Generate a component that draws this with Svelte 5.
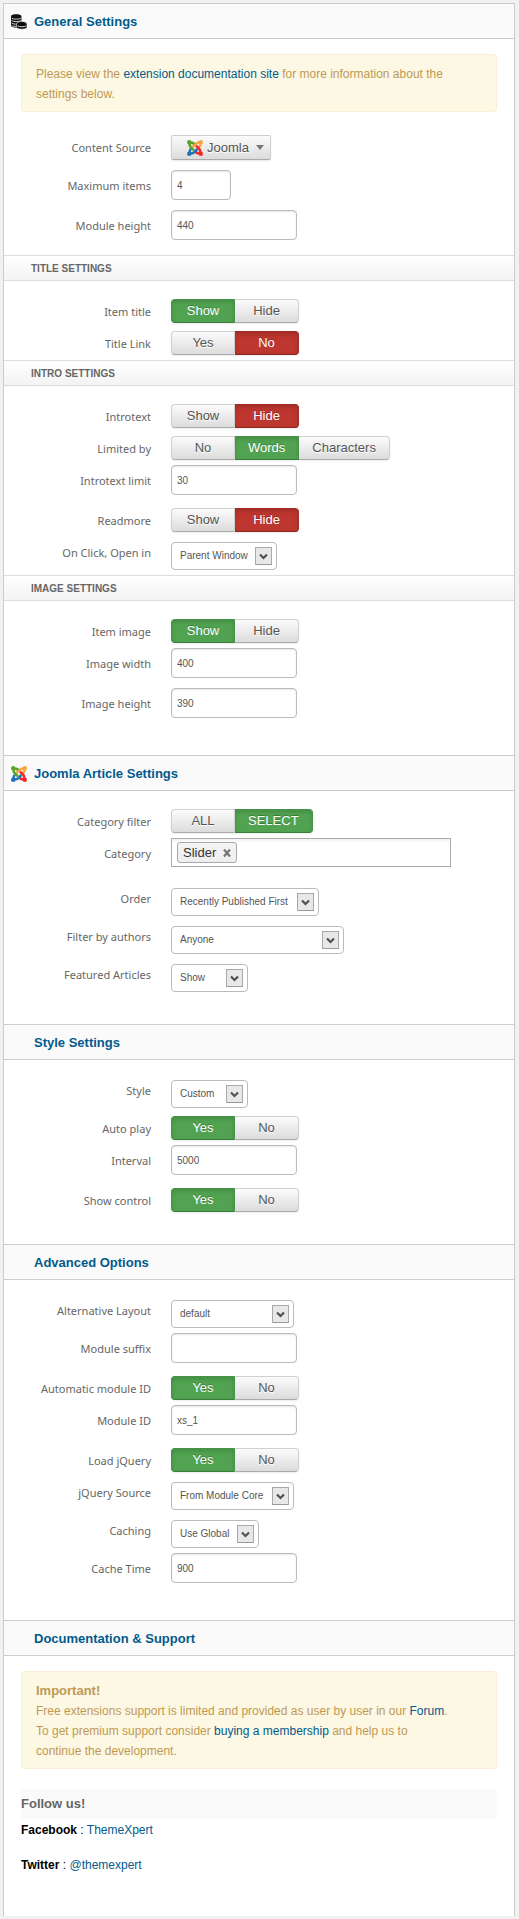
<script>
  const toggle = (id, label, options, value, off) => ({ kind: 'toggle', id, label, options, value, off });
  const text = (id, label, value, size = 'medium') => ({ kind: 'text', id, label, value, size });
  const select = (id, label, value, width) => ({ kind: 'select', id, label, value, width });

  let sections = $state([
    {
      title: 'General Settings',
      icon: 'database',
      notice: 'docs',
      groups: [
        {
          rows: [
            { kind: 'source', id: 'source', label: 'Content Source' },
            text('max-items', 'Maximum items', '4', 'small'),
            text('module-height', 'Module height', '440')
          ]
        },
        {
          title: 'Title settings',
          rows: [
            toggle('item-title', 'Item title', ['Show', 'Hide'], 'Show', 'Hide'),
            toggle('title-link', 'Title Link', ['Yes', 'No'], 'No', 'No')
          ]
        },
        {
          title: 'Intro settings',
          rows: [
            toggle('introtext', 'Introtext', ['Show', 'Hide'], 'Hide', 'Hide'),
            toggle('limited-by', 'Limited by', ['No', 'Words', 'Characters'], 'Words', 'No'),
            text('intro-limit', 'Introtext limit', '30'),
            toggle('readmore', 'Readmore', ['Show', 'Hide'], 'Hide', 'Hide'),
            select('open-in', 'On Click, Open in', 'Parent Window', 106)
          ]
        },
        {
          title: 'Image settings',
          rows: [
            toggle('item-image', 'Item image', ['Show', 'Hide'], 'Show', 'Hide'),
            text('image-width', 'Image width', '400'),
            text('image-height', 'Image height', '390')
          ]
        }
      ]
    },
    {
      title: 'Joomla Article Settings',
      icon: 'joomla',
      groups: [
        {
          rows: [
            toggle('category-filter', 'Category filter', ['ALL', 'SELECT'], 'SELECT', ''),
            { kind: 'tags', id: 'category', label: 'Category', tags: ['Slider'] },
            select('order', 'Order', 'Recently Published First', 148),
            select('authors', 'Filter by authors', 'Anyone', 173),
            select('featured', 'Featured Articles', 'Show', 77)
          ]
        }
      ]
    },
    {
      title: 'Style Settings',
      groups: [
        {
          rows: [
            select('style', 'Style', 'Custom', 77),
            toggle('auto-play', 'Auto play', ['Yes', 'No'], 'Yes', 'No'),
            text('interval', 'Interval', '5000'),
            toggle('show-control', 'Show control', ['Yes', 'No'], 'Yes', 'No')
          ]
        }
      ]
    },
    {
      title: 'Advanced Options',
      groups: [
        {
          rows: [
            select('layout', 'Alternative Layout', 'default', 123),
            text('suffix', 'Module suffix', ''),
            toggle('auto-id', 'Automatic module ID', ['Yes', 'No'], 'Yes', 'No'),
            text('module-id', 'Module ID', 'xs_1'),
            toggle('load-jquery', 'Load jQuery', ['Yes', 'No'], 'Yes', 'No'),
            select('jquery-source', 'jQuery Source', 'From Module Core', 123),
            select('caching', 'Caching', 'Use Global', 88),
            text('cache-time', 'Cache Time', '900')
          ]
        }
      ]
    },
    { title: 'Documentation & Support', support: true, groups: [] }
  ]);
</script>

{#snippet joomla()}
  <svg class="icon" viewBox="0 0 16 16" aria-hidden="true">
    {#each [['#f9a541', 90], ['#f02a28', 180], ['#1c72b8', 270], ['#5aa426', 0]] as [color, angle]}
      <g transform="rotate({angle} 8 8)" fill="none" stroke={color} stroke-width="2.6">
        <circle cx="2.2" cy="2.2" r="2.2" fill={color} stroke="none" />
        <path d="M2.6 2.8C2.3 4.8 2.7 6.1 3.9 7.3L7 10.4" />
        <path d="M2.8 2.7C4.8 2.3 6.1 2.7 7.4 4" />
      </g>
    {/each}
  </svg>
{/snippet}

{#snippet database()}
  <svg class="icon" viewBox="0 0 16 16" aria-hidden="true">
    <path d="M0 2.2C0-.3 10.400-.3 10.400 2.200V12C10.400 14.200 0 14.200 0 11.800Z" fill="#111" />
    <path d="M.6 4.200c1.800 1.300 7.400 1.300 9.200 0M.6 6.600c1.800 1.300 7.400 1.300 9.200 0M.6 9c1.800 1.300 4 1.200 5 1M.6 11.400c1.400 1 3 1 4.500.9" fill="none" stroke="#ddd" stroke-width=".9" />
    <path d="M5.600 10C5.600 6.600 16 6.600 16 10V13.300C16 15.800 5.600 15.800 5.600 13.300Z" fill="#0a0a0a" stroke="#fafafa" stroke-width=".6" />
    <path d="M6.600 11.800c2 1.300 6.500 1.300 8.500 0" fill="none" stroke="#ddd" stroke-width="1" />
  </svg>
{/snippet}

<main class="panel">
  {#each sections as section}
    <section>
      <h2 class="title">
        <span class="slot">
          {#if section.icon === 'database'}{@render database()}{/if}
          {#if section.icon === 'joomla'}{@render joomla()}{/if}
        </span>
        {section.title}
      </h2>

      <div class="content">
        {#if section.notice}
          <p class="notice">
            Please view the <a href="#docs">extension documentation site</a> for more information about the<br />
            settings below.
          </p>
        {/if}

        {#each section.groups as group, index}
          {#if group.title}<h3 class="subtitle">{group.title}</h3>{/if}
          <div class="rows" class:lead={section.notice && index === 0}>
            {#each group.rows as row}
              <div class="row {row.kind}">
                {#if row.kind === 'toggle' || row.kind === 'source'}
                  <span class="label" id="{row.id}-label">{row.label}</span>
                {:else}
                  <label class="label" for={row.id}>{row.label}</label>
                {/if}

                {#if row.kind === 'source'}
                  <button class="dropdown" type="button" aria-labelledby="{row.id}-label {row.id}" id={row.id}>
                    {@render joomla()}
                    Joomla
                    <span class="caret"></span>
                  </button>
                {:else if row.kind === 'toggle'}
                  <div class="buttons" role="group" aria-labelledby="{row.id}-label">
                    {#each row.options as option}
                      <button
                        type="button"
                        class:on={row.value === option && option !== row.off}
                        class:off={row.value === option && option === row.off}
                        aria-pressed={row.value === option}
                        onclick={() => (row.value = option)}>{option}</button>
                    {/each}
                  </div>
                {:else if row.kind === 'text'}
                  <input class="field {row.size}" id={row.id} type="text" bind:value={row.value} />
                {:else if row.kind === 'select'}
                  <div class="picker" style="width: {row.width}px">
                    <select id={row.id}><option>{row.value}</option></select>
                    <svg class="arrow" viewBox="0 0 17 18" aria-hidden="true">
                      <rect x=".5" y=".5" width="16" height="17" fill="#e8e8e8" stroke="#a9a9a9" />
                      <path d="M1 17.500H16.500" stroke="#999" />
                      <path d="M5 7.500 8.500 11 12 7.500" fill="none" stroke="#505050" stroke-width="2.200" />
                    </svg>
                  </div>
                {:else}
                  <div class="tagbox">
                    {#each row.tags as tag}
                      <span class="tag">
                        {tag}
                        <button type="button" aria-label="Remove {tag}" onclick={() => (row.tags = row.tags.filter((t) => t !== tag))}>
                          <svg viewBox="0 0 8 8" aria-hidden="true"><path d="M1 .5 7 7.500M7 .5 1 7.500" stroke="#777" stroke-width="2.300" /></svg>
                        </button>
                      </span>
                    {/each}
                    <input id={row.id} type="text" />
                  </div>
                {/if}
              </div>
            {/each}
          </div>
        {/each}

        {#if section.support}
          <div class="notice">
            <h4>Important!</h4>
            <p>
              Free extensions support is limited and provided as user by user in our <a href="#forum">Forum</a>.<br />
              To get premium support consider <a href="#membership">buying a membership</a> and help us to<br />
              continue the development.
            </p>
          </div>
          <h3 class="follow">Follow us!</h3>
          <p class="social"><strong>Facebook</strong> : <a href="#facebook">ThemeXpert</a></p>
          <p class="social"><strong>Twitter</strong> : <a href="#twitter">@themexpert</a></p>
        {/if}
      </div>
    </section>
  {/each}
</main>

<style>
  :global(body) {
    background: #f1f1f1;
  }

  .panel {
    margin: 3px 4px 2px 3px;
    border: solid #ccc;
    border-width: 0 1px;
    background: #fff;
    color: #000;
    font: 12px/20px 'Liberation Sans', Arial, sans-serif;
  }

  h2, h3, h4, p {
    margin: 0;
  }

  a {
    color: #025a8d;
    text-decoration: none;
  }

  .icon {
    display: block;
    width: 16px;
    height: 16px;
  }

  .title {
    display: flex;
    align-items: center;
    gap: 7px;
    height: 33px;
    padding: 1px 0 0 7px;
    border: solid #ccc;
    border-width: 1px 0;
    background: #fafafa;
    color: #025a8d;
    font-size: 13px;
  }

  .slot {
    width: 16px;
  }

  .content {
    padding: 15px 0 27px;
  }

  .notice {
    margin: 0 17px 20px;
    padding: 9px 14px 7px;
    border: 1px solid #fbeed5;
    border-radius: 4px;
    background: #fcf8e3;
    color: #c09853;
  }

  .notice h4 {
    font-size: 13px;
    line-height: 20px;
  }

  .subtitle {
    padding: 2px 0 0 27px;
    border: solid #ddd;
    border-width: 1px 0;
    background: linear-gradient(#fff, #f3f3f3);
    color: #666;
    font-size: 10px;
    line-height: 22px;
    text-transform: uppercase;
  }

  .subtitle + .rows {
    padding-top: 15px;
  }

  .lead {
    padding-bottom: 5px;
  }

  .row {
    display: grid;
    grid-template-columns: 147px 1fr;
    column-gap: 20px;
    justify-items: start;
    align-items: start;
  }

  .label {
    justify-self: end;
    color: #666;
    font: 11px/32px 'Noto Sans', sans-serif;
    height: 32px;
  }

  .toggle > :last-child,
  .source > :last-child {
    margin-top: 3px;
  }

  .source,
  .select {
    height: 38px;
  }

  .select > :last-child {
    margin-top: 5px;
  }

  .text {
    height: 40px;
  }

  .tags {
    height: 45px;
  }

  .buttons {
    display: flex;
    border-radius: 4px;
    box-shadow: 0 1px 2px rgba(0, 0, 0, 0.08);
  }

  .buttons button,
  .dropdown {
    box-sizing: border-box;
    height: 24px;
    min-width: 64px;
    padding: 0 13px;
    border: 1px solid #d0d0d0;
    border-left-width: 0;
    border-bottom-color: #aaa;
    background: linear-gradient(#fbfbfb, #dcdcdc);
    color: #555;
    font: 13px/20px 'Liberation Sans', Arial, sans-serif;
    text-shadow: 0 1px 0 #fff;
  }

  .buttons button:first-child {
    border-left-width: 1px;
    border-radius: 4px 0 0 4px;
  }

  .buttons button:last-child {
    border-radius: 0 4px 4px 0;
  }

  .buttons .on,
  .buttons .off {
    border-color: #46934a #479449 #3a7d3d;
    background: #51a351;
    box-shadow: inset 0 2px 4px rgba(0, 0, 0, 0.15);
    color: #fff;
    text-shadow: 0 -1px 0 rgba(0, 0, 0, 0.25);
  }

  .buttons .off {
    border-color: #9f2b26 #a52d28 #8b2420;
    background: #bd362f;
  }

  .dropdown {
    display: flex;
    align-items: center;
    gap: 4px;
    width: 100px;
    height: 25px;
    padding: 0 6px 0 15px;
    border-left-width: 1px;
    border-radius: 2px;
    box-shadow: 0 1px 2px rgba(0, 0, 0, 0.1);
  }

  .caret {
    margin-left: auto;
    border: 4px solid transparent;
    border-top: 5px solid #777;
    border-bottom: 0;
  }

  .field,
  .picker select {
    box-sizing: border-box;
    border: 1px solid #bbb;
    border-radius: 4px;
    background: #fff;
    color: #555;
    font: 10px/18px 'Liberation Sans', Arial, sans-serif;
  }

  .field {
    width: 126px;
    height: 30px;
    padding: 0 5px;
    box-shadow: inset 0 1px 2px rgba(0, 0, 0, 0.1);
  }

  .field.small {
    width: 60px;
  }

  .picker {
    display: grid;
    align-items: center;
  }

  .picker > * {
    grid-area: 1 / 1;
  }

  .picker select {
    appearance: none;
    width: 100%;
    height: 28px;
    padding: 0 22px 0 8px;
  }

  .arrow {
    justify-self: end;
    width: 17px;
    height: 18px;
    margin-right: 5px;
    pointer-events: none;
  }

  .tagbox {
    box-sizing: border-box;
    display: flex;
    align-items: center;
    gap: 5px;
    width: 280px;
    height: 29px;
    padding: 0 5px;
    border: 1px solid #aaa;
    background: linear-gradient(#f2f2f2, #fff 4px);
  }

  .tagbox input {
    flex: 1;
    min-width: 0;
    border: 0;
    outline: 0;
    background: transparent;
  }

  .tag {
    display: flex;
    align-items: center;
    gap: 7px;
    padding: 0 5px;
    border: 1px solid #aaa;
    border-radius: 3px;
    background: linear-gradient(#f4f4f4, #eee);
    color: #333;
    font-size: 13px;
    line-height: 19px;
  }

  .tag button {
    display: block;
    padding: 0;
    border: 0;
    background: none;
  }

  .tag svg {
    display: block;
    width: 8px;
    height: 8px;
  }

  .follow {
    margin: 0 17px 1px;
    background: #fafafa;
    color: #666;
    font-size: 13px;
    line-height: 30px;
  }

  .social {
    margin: 0 17px 15px;
  }

  .social:last-child {
    margin-bottom: 14px;
  }
</style>
